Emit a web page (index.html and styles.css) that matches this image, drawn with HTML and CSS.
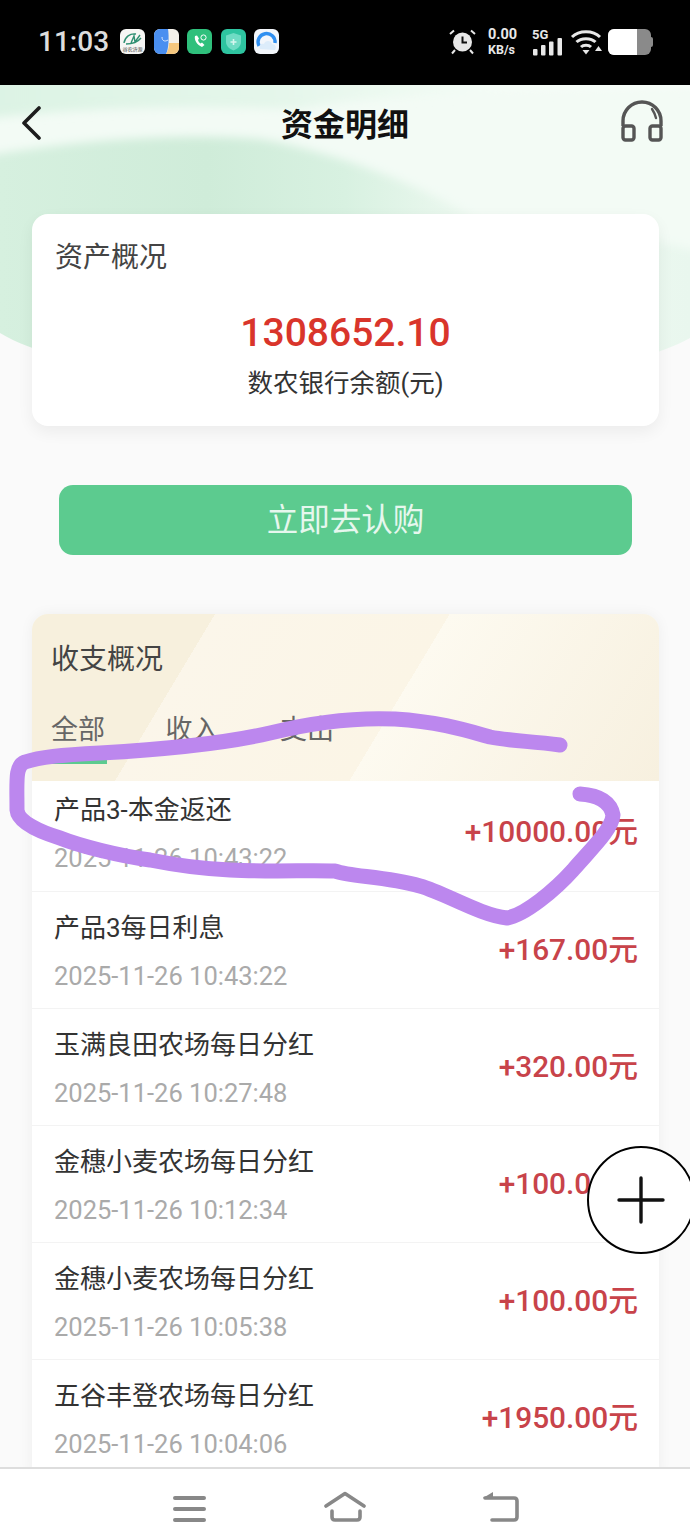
FILE: index.html
```html
<!DOCTYPE html>
<html lang="zh-CN">

<head>
    <meta charset="UTF-8">
    <meta name="viewport" content="width=device-width, initial-scale=1.0">
    <title>资金明细</title>
    <link rel="stylesheet" href="styles.css">
</head>

<body>
    <div class="phone">
        <!-- Status bar -->
        <div class="status-bar">
            <span class="clock">11:03</span>
            <div class="app-icons">
                <svg class="app-icon" viewBox="0 0 25 25">
                    <rect width="25" height="25" rx="6" fill="#f6f6f4"/>
                    <path d="M4 14C5 8 10 4 16 5M6 15C11 15 17 14 21 9M11 14L14 7L15 13L20 6" fill="none" stroke="#2f8f72" stroke-width="1.4"/>
                    <text class="app-icon-text" x="12.500" y="22" text-anchor="middle">谷农济源</text>
                </svg>
                <svg class="app-icon" viewBox="0 0 25 25">
                    <rect width="25" height="25" rx="6" fill="#f4f1ea"/>
                    <path d="M6 0H14C15 6 15 20 12 25H6A6 6 0 0 1 0 19V6A6 6 0 0 1 6 0Z" fill="#4a8ff0"/>
                    <path d="M15 14H25V19A6 6 0 0 1 19 25H12C14 22 15 18 15 14Z" fill="#f5c77e"/>
                    <path d="M8 8C8 12 11 13 14 11" fill="none" stroke="#dbe8fb" stroke-width="1"/>
                </svg>
                <svg class="app-icon" viewBox="0 0 25 25">
                    <rect width="25" height="25" rx="6" fill="#2fc07c"/>
                    <path d="M8 7C7 11 10 16 15 18L17.5 16L15 13.5L13.5 14.5C12 13.5 11.5 12.5 11 11L12 9.5L10 6.5Z" fill="#fff"/>
                    <circle cx="16.5" cy="8.5" r="2.6" fill="none" stroke="#fff" stroke-width="1"/>
                </svg>
                <svg class="app-icon" viewBox="0 0 25 25">
                    <rect width="25" height="25" rx="6" fill="#2ec4a0"/>
                    <path d="M12.5 4L20 6.5V13C20 17 16.5 20 12.5 21.5C8.500 20 5 17 5 13V6.500Z" fill="#6fdcc4"/>
                    <path d="M12.500 10V16M9.500 13H15.500" stroke="#d6f6ee" stroke-width="1.600"/>
                </svg>
                <svg class="app-icon" viewBox="0 0 25 25">
                    <rect width="25" height="25" rx="6" fill="#f2f6fb"/>
                    <path d="M5 17A8.500 8.500 0 1 1 21 14" fill="none" stroke="#2f8ff0" stroke-width="3.400"/>
                    <path d="M6 20C4 16 8 14 10 15C11 11 17 11 18 15C21 15 23 18 21 21Z" fill="#dcecfa"/>
                </svg>
            </div>
            <div class="status-right">
                <svg class="alarm" viewBox="0 0 27 27">
                    <circle cx="13.500" cy="14" r="9.500" fill="#e8e8e8"/>
                    <path d="M13.500 8.500V14.500H18" fill="none" stroke="#111" stroke-width="2"/>
                    <path d="M1 6L5 2.500M26 6L22 2.500M6 22L3 25.500M21 22L24 25.500" stroke="#e8e8e8" stroke-width="2"/>
                </svg>
                <div class="speed">
                    <span class="speed-num">0.00</span>
                    <span class="speed-unit">KB/s</span>
                </div>
                <div class="signal">
                    <span class="signal-label">5G</span>
                    <svg class="signal-bars" viewBox="0 0 30 18">
                        <rect x="0" y="11" width="4.500" height="6.500" rx="1" fill="#e8e8e8"/>
                        <rect x="8" y="7" width="4.500" height="10.500" rx="1" fill="#e8e8e8"/>
                        <rect x="16" y="3.500" width="4.500" height="14" rx="1" fill="#e8e8e8"/>
                        <rect x="24.500" y="0" width="4.500" height="17.500" rx="1" fill="#e8e8e8"/>
                    </svg>
                </div>
                <svg class="wifi" viewBox="0 0 32 26">
                    <path d="M2 8C9 1 23 1 30 8M6.500 13C11 8.500 21 8.500 25.500 13M11 18C13.500 15.500 18.500 15.500 21 18" fill="none" stroke="#e8e8e8" stroke-width="3"/>
                    <path d="M12.500 21H19.500L16 25.500Z" fill="#e8e8e8"/>
                    <path d="M25 22L28.500 17L32 22Z" fill="#e8e8e8"/>
                </svg>
                <div class="battery">
                    <span class="battery-level"></span>
                </div>
            </div>
        </div>

        <main class="page">
            <svg class="page-wave" viewBox="0 0 690 290" preserveAspectRatio="none">
                <defs>
                    <linearGradient id="wave-base" x1="0" x2="1" y1="0" y2="0">
                        <stop offset="0" stop-color="#d6f0df"/>
                        <stop offset="0.3" stop-color="#cfecd9"/>
                        <stop offset="0.5" stop-color="#d8f1e1"/>
                        <stop offset="0.72" stop-color="#f1faf3"/>
                        <stop offset="1" stop-color="#e9f7ee"/>
                    </linearGradient>
                    <linearGradient id="wave-top" x1="0" x2="1" y1="0" y2="0">
                        <stop offset="0" stop-color="#dcf3e4"/>
                        <stop offset="0.4" stop-color="#e4f6ea"/>
                        <stop offset="0.7" stop-color="#f4fcf6"/>
                        <stop offset="1" stop-color="#f8fdf9"/>
                    </linearGradient>
                    <clipPath id="wave-clip">
                        <path d="M0 248C120 320 570 320 690 253V0H0Z"/>
                    </clipPath>
                    <filter id="wave-soft" x="-10%" y="-20%" width="120%" height="140%">
                        <feGaussianBlur stdDeviation="5"/>
                    </filter>
                </defs>
                <g clip-path="url(#wave-clip)">
                    <rect width="690" height="290" fill="url(#wave-base)"/>
                    <path d="M-20 72C80 54 180 48 260 54C340 68 420 100 480 135C560 135 640 150 710 170V-20H-20Z" fill="#f3fbf5" filter="url(#wave-soft)"/>
                    <path d="M-20 34C90 22 190 20 300 24C360 10 520 6 710 0V-20H-20Z" fill="url(#wave-top)" filter="url(#wave-soft)"/>
                </g>
            </svg>

            <header class="top-nav">
                <svg class="back-icon" viewBox="0 0 20 34">
                    <path d="M18 2L3 17L18 32" fill="none" stroke="#1d1d1d" stroke-width="3.600" stroke-linecap="round" stroke-linejoin="round"/>
                </svg>
                <h1 class="page-title">资金明细</h1>
                <svg class="service-icon" viewBox="0 0 44 42">
                    <path d="M3 26V21A19 19 0 0 1 41 21V26" fill="none" stroke="#555" stroke-width="3.400"/>
                    <path d="M32 9C34 12 35 14 36 18" fill="none" stroke="#555" stroke-width="2.400" stroke-linecap="round"/>
                    <rect x="3" y="26" width="11" height="14" rx="2.500" fill="none" stroke="#555" stroke-width="3.400"/>
                    <rect x="30" y="26" width="11" height="14" rx="2.500" fill="none" stroke="#555" stroke-width="3.400"/>
                </svg>
            </header>

            <section class="asset-card">
                <h2 class="card-title">资产概况</h2>
                <div class="asset-amount">1308652.10</div>
                <div class="asset-label">数农银行余额(元)</div>
            </section>

            <button class="buy-btn">立即去认购</button>

            <section class="flow-card">
                <div class="flow-head">
                    <h2 class="flow-title">收支概况</h2>
                    <div class="tabs">
                        <span class="tab tab-active">全部</span>
                        <span class="tab">收入</span>
                        <span class="tab">支出</span>
                    </div>
                </div>
                <ul class="flow-list">
                    <li class="flow-row">
                        <div class="row-info">
                            <div class="row-name">产品3-本金返还</div>
                            <div class="row-time">2025-11-26 10:43:22</div>
                        </div>
                        <span class="row-amount">+10000.00元</span>
                    </li>
                    <li class="flow-row">
                        <div class="row-info">
                            <div class="row-name">产品3每日利息</div>
                            <div class="row-time">2025-11-26 10:43:22</div>
                        </div>
                        <span class="row-amount">+167.00元</span>
                    </li>
                    <li class="flow-row">
                        <div class="row-info">
                            <div class="row-name">玉满良田农场每日分红</div>
                            <div class="row-time">2025-11-26 10:27:48</div>
                        </div>
                        <span class="row-amount">+320.00元</span>
                    </li>
                    <li class="flow-row">
                        <div class="row-info">
                            <div class="row-name">金穗小麦农场每日分红</div>
                            <div class="row-time">2025-11-26 10:12:34</div>
                        </div>
                        <span class="row-amount">+100.00元</span>
                    </li>
                    <li class="flow-row">
                        <div class="row-info">
                            <div class="row-name">金穗小麦农场每日分红</div>
                            <div class="row-time">2025-11-26 10:05:38</div>
                        </div>
                        <span class="row-amount">+100.00元</span>
                    </li>
                    <li class="flow-row">
                        <div class="row-info">
                            <div class="row-name">五谷丰登农场每日分红</div>
                            <div class="row-time">2025-11-26 10:04:06</div>
                        </div>
                        <span class="row-amount">+1950.00元</span>
                    </li>
                </ul>
            </section>
        </main>

        <!-- Phone navigation keys -->
        <nav class="key-bar">
            <svg class="key-icon" viewBox="0 0 42 32">
                <path d="M7 8H36M7 19H36M7 30H36" fill="none" stroke="#888" stroke-width="4" stroke-linecap="round"/>
            </svg>
            <svg class="key-icon" viewBox="0 0 42 32">
                <path d="M2 16L21 3.500L40 16" fill="none" stroke="#888" stroke-width="3.600" stroke-linecap="round" stroke-linejoin="round"/>
                <path d="M8 21V27Q8 30 11 30H33Q36 30 36 27V21" fill="none" stroke="#888" stroke-width="3.600" stroke-linecap="round"/>
            </svg>
            <svg class="key-icon" viewBox="0 0 42 32">
                <path d="M5 8H34Q37 8 37 11V27Q37 30 34 30H12" fill="none" stroke="#888" stroke-width="3.600" stroke-linecap="round"/>
                <path d="M3 8L13 2V8Z" fill="#888"/>
            </svg>
        </nav>

        <button class="fab">
            <svg class="fab-plus" viewBox="0 0 48 48">
                <path d="M24 2V46M2 24H46" stroke="#111" stroke-width="3.400" stroke-linecap="round"/>
            </svg>
        </button>

        <!-- Hand drawn marker over the screenshot -->
        <svg class="scribble" viewBox="0 0 690 1525">
            <path d="M560 745C530 741 510 741 490 737C465 730 440 722 395 719C350 717 310 723 270 733C240 740 190 748 100 753C60 755 40 757 25 762C15 766 17 780 17 810C18 822 40 832 60 838C80 846 120 856 150 860C180 866 205 869 230 870C270 872 310 870 335 871C350 877 385 876 420 886C445 893 480 915 507 918C525 915 555 890 573 870C590 850 612 830 613 815C610 800 595 795 580 794" fill="none" stroke="#bc87ee" stroke-width="15" stroke-linecap="round" stroke-linejoin="round"/>
        </svg>
    </div>
</body>

</html>
```

FILE: styles.css
```css
* {
    box-sizing: border-box;
}

html,
body {
    margin: 0;
    padding: 0;
    height: 100%;
}

body {
    font-family: Roboto, "Noto Sans CJK SC", sans-serif;
    background-color: #fafafa;
    overflow: hidden;
}

h1,
h2 {
    margin: 0;
    font-weight: 400;
}

.phone {
    position: relative;
    width: 690px;
    height: 1525px;
    display: flex;
    flex-direction: column;
    overflow: hidden;
}

/* status bar */
.status-bar {
    flex: 0 0 85px;
    background-color: #000;
    display: flex;
    align-items: center;
    padding: 0 39px 2px 38px;
}

.clock {
    color: #ddd;
    font-size: 28px;
    font-weight: 500;
    width: 82px;
}

.app-icons {
    display: flex;
    gap: 8.500px;
}

.app-icon {
    width: 25px;
    height: 25px;
}

.app-icon-text {
    font-size: 5px;
    fill: #444;
}

.status-right {
    margin-left: auto;
    display: flex;
    align-items: center;
}

.alarm {
    width: 27px;
    height: 27px;
    margin-right: 12px;
}

.speed {
    display: flex;
    flex-direction: column;
    color: #e8e8e8;
    width: 44px;
    font-weight: 700;
}

.speed-num {
    font-size: 14.500px;
    line-height: 15px;
}

.speed-unit {
    font-size: 12.500px;
    line-height: 15px;
}

.signal {
    position: relative;
    width: 30px;
    height: 28px;
    margin-right: 8px;
}

.signal-label {
    color: #e8e8e8;
    font-size: 13px;
    font-weight: 700;
    line-height: 14px;
    display: block;
}

.signal-bars {
    position: absolute;
    left: 1px;
    bottom: 0;
    width: 30px;
    height: 18px;
}

.wifi {
    width: 32px;
    height: 26px;
    margin-right: 6px;
}

.battery {
    position: relative;
    width: 43px;
    height: 26px;
    border-radius: 6px;
    background-color: #8a8a8a;
}

.battery::after {
    content: "";
    position: absolute;
    top: 8px;
    right: -2px;
    width: 2px;
    height: 10px;
    border-radius: 0 2px 2px 0;
    background-color: #8a8a8a;
}

.battery-level {
    display: block;
    width: 29px;
    height: 100%;
    border-radius: 6px 0 0 6px;
    background-color: #fff;
}

/* page */
.page {
    position: relative;
    flex: 1;
    overflow: hidden;
    padding: 0 31px 0 32px;
}

.page-wave {
    position: absolute;
    top: 0;
    left: 0;
    width: 690px;
    height: 290px;
}

.top-nav {
    position: relative;
    height: 129px;
    margin: 0 -31px 0 -32px;
    padding: 0 21px 54px;
    display: grid;
    grid-template-columns: 1fr auto 1fr;
    align-items: center;
}

.back-icon {
    width: 20px;
    height: 34px;
}

.page-title {
    font-size: 32px;
    font-weight: 700;
    color: #111;
    margin-top: -2px;
}

.service-icon {
    width: 44px;
    height: 42px;
    justify-self: end;
    margin-top: -3px;
    margin-right: 5px;
}

.asset-card {
    position: relative;
    height: 212px;
    background-color: #fff;
    border-radius: 16px;
    padding: 24px 23px 0;
    box-shadow: 0 6px 16px rgba(0, 0, 0, 0.06);
    text-align: center;
}

.card-title {
    font-size: 28px;
    line-height: 40px;
    color: #444;
    text-align: left;
}

.asset-amount {
    margin-top: 32px;
    font-size: 39px;
    line-height: 46px;
    font-weight: 500;
    color: #d9352b;
}

.asset-label {
    margin-top: 7px;
    font-size: 25.500px;
    line-height: 40px;
    color: #333;
}

.buy-btn {
    display: block;
    width: 573px;
    height: 70px;
    margin: 59px 0 59px 27px;
    padding: 0 0 6px;
    border: none;
    border-radius: 14px;
    background-color: #5ccb8f;
    color: #e6f7ee;
    font-family: inherit;
    font-size: 31.500px;
}

.flow-card {
    border-radius: 16px 16px 0 0;
    box-shadow: 0 0 14px rgba(0, 0, 0, 0.05);
    overflow: hidden;
}

.flow-head {
    height: 167px;
    padding: 26px 19px 0;
    background: linear-gradient(121deg, #f7f0dd 157px, #fbf6ea 157px, #fbf5e6 358px, #fdfaf0 358px, #f7f0df 623px);
}

.flow-title {
    font-size: 28px;
    line-height: 40px;
    color: #444;
}

.tabs {
    display: flex;
    gap: 60.500px;
    margin-top: 30px;
}

.tab {
    position: relative;
    font-size: 27px;
    line-height: 40px;
    color: #666;
}

.tab-active::after {
    content: "";
    display: block;
    height: 5px;
    margin: 9px -2px 0 0;
    background-color: #5ccb8f;
}

.flow-list {
    list-style: none;
    margin: 0;
    padding: 0;
    background-color: #fff;
}

.flow-row {
    height: 117px;
    padding: 0 21px 0 22px;
    display: flex;
    justify-content: space-between;
    align-items: center;
    border-bottom: 1px solid #f3f3f3;
}

.flow-row:first-child {
    height: 111px;
    padding-bottom: 8px;
}

.row-info {
    padding-top: 4px;
}

.row-name {
    font-size: 26px;
    line-height: 38px;
    color: #333;
}

.row-time {
    margin-top: 10px;
    font-size: 25.500px;
    line-height: 38px;
    color: #aaa;
}

.row-amount {
    padding-bottom: 7px;
    font-size: 29.800px;
    font-weight: 500;
    color: #c8434a;
}

/* phone keys */
.key-bar {
    flex: 0 0 58px;
    position: relative;
    background-color: #fff;
    border-top: 2px solid #ddd;
    display: flex;
    justify-content: center;
    gap: 114px;
    align-items: flex-end;
    padding: 0 0 3px;
}

.key-icon {
    width: 42px;
    height: 32px;
}

.fab {
    position: absolute;
    left: 587px;
    top: 1146px;
    width: 108px;
    height: 108px;
    padding: 0;
    border: 2px solid #000;
    border-radius: 50%;
    background-color: #fff;
    display: flex;
    align-items: center;
    justify-content: center;
}

.fab-plus {
    width: 48px;
    height: 48px;
}

.scribble {
    position: absolute;
    top: 0;
    left: 0;
    width: 690px;
    height: 1525px;
    pointer-events: none;
}
```
